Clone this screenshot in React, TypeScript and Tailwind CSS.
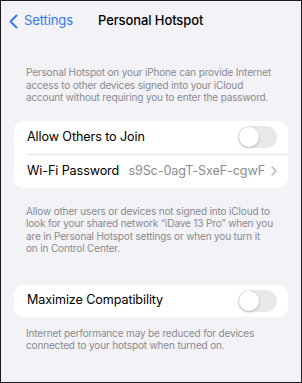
import React from "react";

function Toggle() {
  return (
    <div className="relative h-[22px] w-[39px] rounded-full bg-[#e9e9ea]">
      <div className="absolute left-[1px] top-[1px] h-[20px] w-[20px] rounded-full bg-white shadow-[0_1px_3px_rgba(0,0,0,0.25)]" />
    </div>
  );
}

const desc = "pl-[25px] pr-[24px] text-[10px] leading-[12.5px] text-[#8a8a8e] tracking-[-0.15px]";

export default function App() {
  return (
    <div
      className="h-[383px] w-[302px] overflow-hidden border border-[#1c1c1e] bg-[#f2f2f7] text-black"
      style={{ fontFamily: "Inter, 'Noto Sans', sans-serif" }}
    >
      <div className="relative flex h-[40px] items-center">
        <div className="flex items-center pl-[7px] text-[#3478f6]">
          <svg width="11" height="15" viewBox="0 0 11 15" fill="none">
            <path d="M8.5 1.5 L2.5 7.5 L8.5 13.5" stroke="#3478f6" strokeWidth="1.8" strokeLinecap="round" strokeLinejoin="round" />
          </svg>
          <span className="ml-[5px] text-[13px] tracking-[-0.1px]">Settings</span>
        </div>
        <div className="absolute left-[97px] text-[13px] font-medium tracking-[-0.1px]">Personal Hotspot</div>
      </div>

      <div className={desc + " pt-[25px]"}>
        Personal Hotspot on your iPhone can provide Internet<br />
        access to other devices signed into your iCloud<br />
        account without requiring you to enter the password.
      </div>

      <div className="mx-[13px] mt-[17px] rounded-[9px] bg-white">
        <div className="flex h-[33px] items-center justify-between pl-[13px] pr-[11px]">
          <span className="text-[12.6px] tracking-[-0.1px]">Allow Others to Join</span>
          <Toggle />
        </div>
        <div className="ml-[13px] h-px bg-[#e3e3e6]" />
        <div className="flex h-[33px] items-center pl-[13px] pr-[11px]">
          <span className="text-[12.6px] tracking-[-0.1px]">Wi-Fi Password</span>
          <span className="ml-auto text-[12.6px] tracking-[-0.1px] text-[#8a8a8e]">s9Sc-0agT-SxeF-cgwF</span>
          <svg className="ml-[6px]" width="6" height="10" viewBox="0 0 6 10" fill="none">
            <path d="M1 1 L5 5 L1 9" stroke="#b4b4b8" strokeWidth="1.4" strokeLinecap="round" strokeLinejoin="round" />
          </svg>
        </div>
      </div>

      <div className={desc + " pt-[17px]"}>
        Allow other users or devices not signed into iCloud to<br />
        look for your shared network “iDave 13 Pro” when you<br />
        are in Personal Hotspot settings or when you turn it<br />
        on in Control Center.
      </div>

      <div className="mx-[13px] mt-[30px] rounded-[9px] bg-white">
        <div className="flex h-[32px] items-center justify-between pl-[13px] pr-[11px]">
          <span className="text-[12.6px] tracking-[-0.1px]">Maximize Compatibility</span>
          <Toggle />
        </div>
      </div>

      <div className={desc + " pt-[10px]"}>
        Internet performance may be reduced for devices<br />
        connected to your hotspot when turned on.
      </div>
    </div>
  );
}
